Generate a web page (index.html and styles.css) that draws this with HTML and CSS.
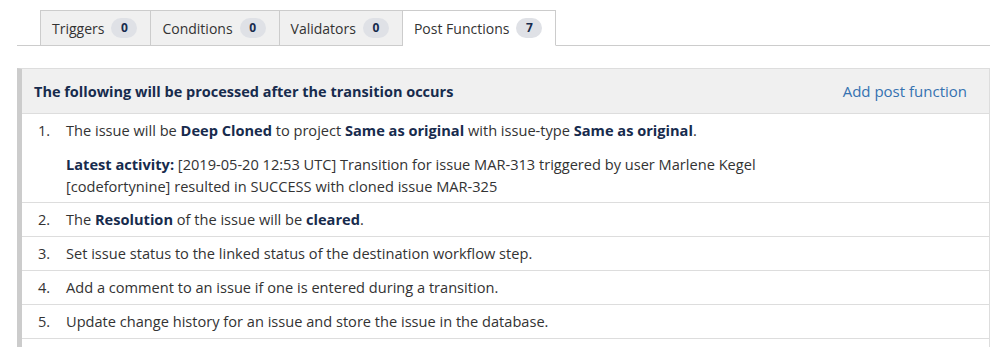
FILE: index.html
```html
<!DOCTYPE html>
<html lang="en">
<head>
    <meta charset="UTF-8">
    <title>Post Functions</title>
    <link rel="stylesheet" href="styles.css">
</head>
<body>
    <div class="tabs">
        <div class="tab">Triggers <span class="count">0</span></div>
        <div class="tab">Conditions <span class="count">0</span></div>
        <div class="tab">Validators <span class="count">0</span></div>
        <div class="tab active">Post Functions <span class="count">7</span></div>
    </div>

    <div class="panel">
        <div class="panel-head">
            <h3>The following will be processed after the transition occurs</h3>
            <a href="#">Add post function</a>
        </div>
        <ol class="steps">
            <li>
                <div class="step-text">The issue will be <b>Deep Cloned</b> to project <b>Same as original</b> with issue-type <b>Same as original</b>.</div>
                <div class="activity"><b>Latest activity:</b> [2019-05-20 12:53 UTC] Transition for issue MAR-313 triggered by user Marlene Kegel [codefortynine] resulted in SUCCESS with cloned issue MAR-325</div>
            </li>
            <li><div class="step-text">The <b>Resolution</b> of the issue will be <b>cleared</b>.</div></li>
            <li><div class="step-text">Set issue status to the linked status of the destination workflow step.</div></li>
            <li><div class="step-text">Add a comment to an issue if one is entered during a transition.</div></li>
            <li><div class="step-text">Update change history for an issue and store the issue in the database.</div></li>
            <li><div class="step-text">&nbsp;</div></li>
        </ol>
    </div>
</body>
</html>
```

FILE: styles.css
```css
body {
    margin: 0;
    padding: 10px 8px 0 17px;
    font-family: 'Open Sans', 'Noto Sans', sans-serif;
    font-size: 14.6px;
    color: #333;
    background: #fff;
    overflow: hidden;
}

.tabs {
    display: flex;
    padding-left: 23px;
    border-bottom: 1px solid #ccc;
    font-size: 14px;
}

.tab {
    display: flex;
    align-items: center;
    gap: 7px;
    height: 34px;
    padding: 0 13px 0 11px;
    background-color: #f0f0f0;
    border: 1px solid #ccc;
    border-left: none;
    margin-bottom: -1px;
    color: #333;
}

.tab:first-child {
    border-left: 1px solid #ccc;
}

.tab.active {
    background-color: #fff;
    border-bottom-color: #fff;
}

.count {
    display: inline-block;
    min-width: 10px;
    padding: 1px 8px;
    border-radius: 10px;
    background-color: #dfe1e6;
    color: #172b4d;
    font-size: 12px;
    font-weight: bold;
    line-height: 18px;
    text-align: center;
}

.panel {
    margin-top: 22px;
    border: 1px solid #ddd;
    border-left: 5px solid #ccc;
    border-bottom: none;
}

.panel-head {
    display: flex;
    justify-content: space-between;
    align-items: center;
    height: 44px;
    padding: 0 22px 0 12px;
    background-color: #f0f0f0;
    border-bottom: 1px solid #ddd;
}

.panel-head h3 {
    margin: 0;
    font-size: 14.5px;
    font-weight: bold;
    color: #172b4d;
}

.panel-head a {
    color: #3572b0;
    text-decoration: none;
    font-size: 15px;
}

.steps {
    margin: 0;
    padding: 0;
    list-style: none;
    counter-reset: step;
}

.steps li {
    counter-increment: step;
    padding: 7px 10px 7px 44px;
    border-bottom: 1px solid #ddd;
    position: relative;
    line-height: 19px;
}

.steps li::before {
    content: counter(step) ".";
    position: absolute;
    left: 16px;
    top: 7px;
}

.steps b {
    color: #172b4d;
}

.activity {
    max-width: 740px;
    margin-top: 13px;
    margin-bottom: -2px;
    line-height: 22px;
}
```
